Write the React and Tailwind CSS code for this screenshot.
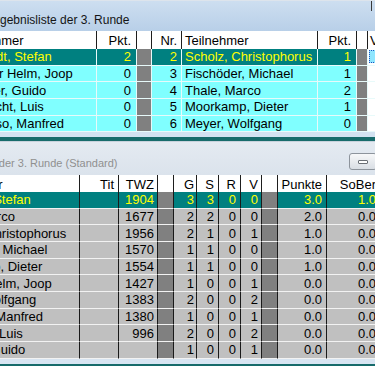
import React from "react";

const topCols = [
  { w: "w-[140px]", a: "justify-start pl-[3px]" },
  { w: "w-[40px]", a: "justify-end pr-[5px]" },
  { w: "w-[15px]", a: "", gray: true },
  { w: "w-[30px]", a: "justify-end pr-[4px]" },
  { w: "w-[136px]", a: "justify-start pl-[3px]" },
  { w: "w-[39px]", a: "justify-end pr-[5px]" },
  { w: "w-[11px]", a: "", gray: true },
  { w: "w-[40px]", a: "justify-start pl-[2px]", white: true },
];

const topHeader = ["Teilnehmer", "Pkt.", "", "Nr.", "Teilnehmer", "Pkt.", "", "V"];

const topRows = [
  { hl: true, c: ["Schmidt, Stefan", "2", "", "2", "Scholz, Christophorus", "1", "", ""] },
  { c: ["van der Helm, Joop", "0", "", "3", "Fischöder, Michael", "1", "", ""] },
  { c: ["Wagner, Guido", "0", "", "4", "Thale, Marco", "2", "", ""] },
  { c: ["Ruprecht, Luis", "0", "", "5", "Moorkamp, Dieter", "1", "", ""] },
  { c: ["Cardoso, Manfred", "0", "", "6", "Meyer, Wolfgang", "0", "", ""] },
];

const botCols = [
  { w: "w-[144px]", a: "justify-start pl-[3px]" },
  { w: "w-[39px]", a: "justify-end pr-[4px]" },
  { w: "w-[39px]", a: "justify-end pr-[3px]" },
  { w: "w-[16px]", a: "", gray: true },
  { w: "w-[23px]", a: "justify-end pr-[2px]" },
  { w: "w-[22px]", a: "justify-end pr-[4px]" },
  { w: "w-[22px]", a: "justify-end pr-[4px]" },
  { w: "w-[21px]", a: "justify-end pr-[3px]" },
  { w: "w-[16px]", a: "", gray: true },
  { w: "w-[49px]", a: "justify-end pr-[4px]" },
  { w: "w-[54px]", a: "justify-end pr-[4px]" },
];

const botHeader = ["Teilnehmer", "Tit", "TWZ", "", "G", "S", "R", "V", "", "Punkte", "SoBer"];

const botRows = [
  ["Schmidt, Stefan", "", "1904", "", "3", "3", "0", "0", "", "3.0", "1.0"],
  ["Thale, Marco", "", "1677", "", "2", "2", "0", "0", "", "2.0", "0.0"],
  ["Scholz, Christophorus", "", "1956", "", "2", "1", "0", "1", "", "1.0", "0.0"],
  ["Fischöder, Michael", "", "1570", "", "1", "1", "0", "0", "", "1.0", "0.0"],
  ["Moorkamp, Dieter", "", "1554", "", "1", "1", "0", "0", "", "1.0", "0.0"],
  ["van der Helm, Joop", "", "1427", "", "1", "0", "0", "1", "", "0.0", "0.0"],
  ["Meyer, Wolfgang", "", "1383", "", "2", "0", "0", "2", "", "0.0", "0.0"],
  ["Cardoso, Manfred", "", "1380", "", "1", "0", "0", "1", "", "0.0", "0.0"],
  ["Ruprecht, Luis", "", "996", "", "2", "0", "0", "2", "", "0.0", "0.0"],
  ["Wagner, Guido", "", "", "", "1", "0", "0", "1", "", "0.0", "0.0"],
];

function TopWindow() {
  return (
    <div className="flex flex-col">
      <div className="h-[31px] border-t border-[#dde4ec] bg-gradient-to-b from-[#cddef0] to-[#b8cfe8] flex justify-between overflow-hidden">
        <span className="ml-[-12px] mt-[12px] text-[12px] leading-[14px] text-[#141414] whitespace-nowrap">
          Ergebnisliste der 3. Runde
        </span>
        <div className="w-[4px] h-[10px] border-l border-[#3a3a3a] shrink-0" />
      </div>
      <div className="overflow-hidden">
        <div className="ml-[-43px] flex flex-col w-max">
          <div className="flex h-[18px] bg-white">
            {topCols.map((col, i) => (
              <div
                key={i}
                className={`flex items-center shrink-0 h-full whitespace-nowrap overflow-hidden border-r border-[#1e1e1e] pt-[1px] ${col.w} ${col.a}`}
              >
                {topHeader[i]}
              </div>
            ))}
          </div>
          {topRows.map((row, r) => (
            <div key={r} className="flex h-[16.67px]">
              {topCols.map((col, i) => {
                let bg = row.hl ? "bg-[#008080] text-[#ffff00]" : "bg-[#80ffff]";
                if (col.gray) bg = "bg-[#808080]";
                if (col.white) bg = "bg-white";
                return (
                  <div
                    key={i}
                    className={`flex items-center shrink-0 h-full whitespace-nowrap overflow-hidden border-r border-b border-[#e8fafa] ${col.w} ${col.a} ${bg}`}
                  >
                    {col.white && row.hl ? (
                      <div className="ml-[-1px] w-full h-[13px] bg-[#8fe6ff] border border-dotted border-[#1f4fbf]" />
                    ) : (
                      row.c[i]
                    )}
                  </div>
                );
              })}
            </div>
          ))}
        </div>
      </div>
      <div className="h-[5px] bg-[#d3e2f1]" />
    </div>
  );
}

function BottomWindow() {
  return (
    <div className="flex flex-col">
      <div className="h-[34px] border-t border-[#c9d2dc] bg-gradient-to-b from-[#e4eaf1] to-[#dbe3ec] flex justify-between overflow-hidden">
        <span className="ml-[-66px] mt-[14px] text-[11px] leading-[14px] text-[#909090] whitespace-nowrap">
          Tabelle nach der 3. Runde (Standard)
        </span>
        <div className="mt-[11px] mr-[-2px] w-[28px] h-[17px] shrink-0 rounded-[3px] border border-[#8d949c] bg-gradient-to-b from-[#f7f8f9] to-[#d9dee4] flex items-center justify-center">
          <div className="w-[10px] h-[4px] rounded-[1px] border border-[#6a6f75] bg-white" />
        </div>
      </div>
      <div className="overflow-hidden">
        <div className="ml-[-64px] flex flex-col w-max">
          <div className="flex h-[16.67px] bg-white">
            {botCols.map((col, i) => (
              <div
                key={i}
                className={`flex items-center shrink-0 h-full whitespace-nowrap overflow-hidden border-r border-[#1e1e1e] pt-[2px] ${col.w} ${col.a}`}
              >
                {botHeader[i]}
              </div>
            ))}
          </div>
          {botRows.map((row, r) => (
            <div key={r} className="flex h-[16.67px]">
              {botCols.map((col, i) => {
                let bg = r === 0 ? "bg-[#008080] text-[#ffff00]" : "bg-[#c0c0c0]";
                if (col.gray) bg = "bg-[#808080]";
                return (
                  <div
                    key={i}
                    className={`flex items-center shrink-0 h-full whitespace-nowrap overflow-hidden border-r border-r-[#1a1a1a] border-b border-b-[#f2f2f2] ${col.w} ${col.a} ${bg}`}
                  >
                    {row[i]}
                  </div>
                );
              })}
            </div>
          ))}
        </div>
      </div>
      <div className="h-[5px] bg-[#d8e5f2]" />
    </div>
  );
}

export default function App() {
  return (
    <div className="w-[375px] h-[366px] overflow-hidden bg-[#176b6b] font-['Liberation_Sans',Arial,sans-serif] text-[13px] leading-none text-black">
      <TopWindow />
      <div className="h-[4px]" />
      <BottomWindow />
    </div>
  );
}
